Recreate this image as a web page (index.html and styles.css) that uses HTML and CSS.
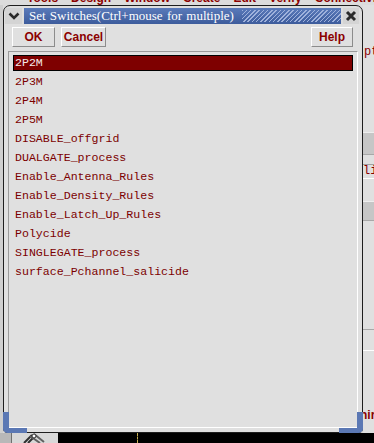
FILE: index.html
```html
<!DOCTYPE html>
<html lang="en">
<head>
    <meta charset="UTF-8">
    <link rel="stylesheet" href="styles.css">
    <title>Set Switches</title>
</head>
<body>

    <div class="desktop">
        <!-- parent application behind the dialog -->
        <div class="app-menu">
            <div class="app-menu-line">
                <span>Tools</span><span>Design</span><span>Window</span><span>Create</span><span>Edit</span><span>Verify</span><span>Connectivity</span>
            </div>
        </div>
        <div class="app-middle">
            <div class="app-left"></div>
            <div class="app-center"></div>
            <div class="app-right">
                <div class="app-text pt">pt</div>
                <div class="app-band band-1"></div>
                <div class="app-field">li</div>
                <div class="app-band band-2"></div>
                <div class="app-rule rule-1"></div>
                <div class="app-rule rule-2"></div>
                <div class="app-bold">nir</div>
            </div>
        </div>
        <div class="taskbar">
            <div class="task-left"></div>
            <div class="task-icon">
                <svg width="30" height="10" viewBox="0 0 30 10">
                    <path d="M6 10 L14 2 M10 10 L18 2" stroke="#303030" stroke-width="2" fill="none"/>
                    <path d="M12 3 L22 10 M16 1 L26 9" stroke="#606060" stroke-width="2" fill="none"/>
                    <circle cx="16" cy="3" r="2" fill="#fff" stroke="#303030"/>
                </svg>
            </div>
            <div class="task-black">
                <div class="task-dash"></div>
            </div>
        </div>

        <!-- the dialog window -->
        <div class="dialog">
            <div class="titlebar">
                <div class="menu-btn">
                    <svg width="12" height="8" viewBox="0 0 12 8">
                        <path d="M1.5 1.5 L6 6 L10.5 1.5" stroke="#2a2a2a" stroke-width="2.6" fill="none"/>
                    </svg>
                </div>
                <div class="title">
                    <span class="title-text">Set Switches(Ctrl+mouse for multiple)</span>
                    <span class="title-hatch"></span>
                </div>
                <div class="close-btn">
                    <svg width="12" height="12" viewBox="0 0 12 12">
                        <path d="M2 2 L10 10 M10 2 L2 10" stroke="#2a2a2a" stroke-width="3" fill="none"/>
                    </svg>
                </div>
            </div>

            <div class="dialog-body">
                <div class="toolbar">
                    <button class="btn btn-ok">OK</button>
                    <button class="btn btn-cancel">Cancel</button>
                    <button class="btn btn-help">Help</button>
                </div>

                <ul class="switch-list">
                    <li class="selected">2P2M</li>
                    <li>2P3M</li>
                    <li>2P4M</li>
                    <li>2P5M</li>
                    <li>DISABLE_offgrid</li>
                    <li>DUALGATE_process</li>
                    <li>Enable_Antenna_Rules</li>
                    <li>Enable_Density_Rules</li>
                    <li>Enable_Latch_Up_Rules</li>
                    <li>Polycide</li>
                    <li>SINGLEGATE_process</li>
                    <li>surface_Pchannel_salicide</li>
                </ul>
            </div>
        </div>
    </div>

</body>
</html>
```

FILE: styles.css
```css
body {
    margin: 0;
    padding: 0;
    background: #000000;
    font-family: 'Liberation Sans', Arial, sans-serif;
}

.desktop {
    position: relative;
    width: 374px;
    height: 443px;
    overflow: hidden;
    display: flex;
    flex-direction: column;
    background: #dcdcdc;
}

/* parent application */
.app-menu {
    height: 5px;
    overflow: hidden;
    background: #dcdcdc;
}

.app-menu-line {
    display: flex;
    gap: 13px;
    padding-left: 27px;
    margin-top: -9px;
    font-size: 12px;
    font-weight: bold;
    line-height: 15px;
    color: #8b0000;
    white-space: nowrap;
}

.app-middle {
    flex: 1;
    display: flex;
}

.app-left {
    width: 3px;
    background: #cfcfcf;
}

.app-center {
    flex: 1;
}

.app-right {
    width: 11px;
    background: #e0e0e0;
    display: flex;
    flex-direction: column;
    overflow: hidden;
}

.app-text {
    font-family: 'Liberation Mono', monospace;
    font-size: 12px;
    color: #8b0000;
    line-height: 14px;
    white-space: nowrap;
}

.pt {
    margin-top: 40px;
    padding-left: 1px;
}

.app-band {
    background: #c6c6c6;
    border-top: 1px solid #eeeeee;
    border-bottom: 1px solid #a8a8a8;
}

.band-1 {
    margin-top: 73px;
    height: 21px;
}

.app-field {
    margin-top: 9px;
    height: 13px;
    border-top: 1px solid #a0a0a0;
    border-bottom: 1px solid #ffffff;
    font-family: 'Liberation Mono', monospace;
    font-size: 12px;
    line-height: 13px;
    color: #8b0000;
}

.band-2 {
    margin-top: 22px;
    height: 18px;
}

.app-rule {
    height: 1px;
    background: #a8a8a8;
}

.rule-1 {
    margin-top: 108px;
}

.rule-2 {
    margin-top: 20px;
    background: #ffffff;
}

.app-bold {
    margin-top: 57px;
    font-size: 12px;
    font-weight: bold;
    color: #8b0000;
    line-height: 14px;
    margin-left: -3px;
}

.taskbar {
    height: 10px;
    display: flex;
}

.task-left {
    width: 11px;
    background: #b8b8b8;
    border-right: 1px solid #707070;
}

.task-icon {
    width: 46px;
    background: #d8d8d8;
    display: flex;
    padding-left: 6px;
    box-sizing: border-box;
}

.task-black {
    flex: 1;
    background: #000000;
    padding-left: 79px;
}

.task-dash {
    width: 0;
    height: 10px;
    border-left: 1px dashed #c8b050;
}

/* dialog window */
.dialog {
    position: absolute;
    left: 3px;
    top: 5px;
    width: 360px;
    height: 428px;
    box-sizing: border-box;
    border: 1px solid #1e1e1e;
    border-radius: 7px 7px 4px 4px;
    background: #dedede;
    display: flex;
    flex-direction: column;
}

.dialog::before,
.dialog::after {
    content: '';
    position: absolute;
    bottom: -1px;
    height: 16px;
    width: 18px;
    border-bottom: 5px solid #5b78b4;
}

.dialog::before {
    left: -1px;
    border-left: 6px solid #5b78b4;
    border-bottom-left-radius: 5px;
}

.dialog::after {
    right: -1px;
    border-right: 6px solid #5b78b4;
    border-bottom-right-radius: 5px;
}

.titlebar {
    display: flex;
    gap: 2px;
    height: 16px;
    padding: 2px 3px 0 1px;
}

.menu-btn,
.close-btn {
    width: 17px;
    display: flex;
    align-items: center;
    justify-content: center;
    background: #d4d4d4;
}

.close-btn {
    width: 16px;
}

.title {
    flex: 1;
    display: flex;
    align-items: center;
    background: linear-gradient(#5a7aba, #3d5c9c);
    padding-left: 5px;
    overflow: hidden;
}

.title-text {
    font-family: 'Liberation Serif', 'Times New Roman', serif;
    font-size: 13px;
    color: #ffffff;
    word-spacing: 1px;
    white-space: nowrap;
}

.title-hatch {
    flex: 1;
    align-self: stretch;
    margin: 2px 0 2px 8px;
    background: repeating-linear-gradient(135deg, #9fb2dc 0 1px, transparent 1px 3px);
}

.dialog-body {
    flex: 1;
    display: flex;
    flex-direction: column;
    gap: 4px;
    padding: 3px 4px 4px 4px;
    background: #e0e0e0;
}

.toolbar {
    display: flex;
    gap: 6px;
    padding: 0 5px 0 4px;
}

.btn {
    height: 20px;
    padding: 0;
    background: #e0e0e0;
    border: 1px solid;
    border-color: #ffffff #8c8c8c #8c8c8c #ffffff;
    font-family: 'Liberation Sans', Arial, sans-serif;
    font-size: 12px;
    font-weight: bold;
    color: #8b0000;
}

.btn-ok {
    width: 43px;
}

.btn-cancel {
    width: 45px;
}

.btn-help {
    width: 42px;
    margin-left: auto;
}

.switch-list {
    flex: 1;
    list-style: none;
    margin: 0;
    padding: 3px 4px 0 4px;
    border: 1px solid;
    border-color: #9a9a9a #ffffff #ffffff #9a9a9a;
    background: #e0e0e0;
    font-family: 'Liberation Mono', 'Courier New', monospace;
    font-size: 11.6px;
    color: #7c0000;
}

.switch-list li {
    height: 16px;
    box-sizing: border-box;
    margin-bottom: 3px;
    padding-left: 1px;
    border: 1px solid transparent;
    line-height: 14px;
    white-space: nowrap;
}

.switch-list li.selected {
    background: #7e0000;
    border-color: #000000;
    color: #f4e8e8;
}
```
